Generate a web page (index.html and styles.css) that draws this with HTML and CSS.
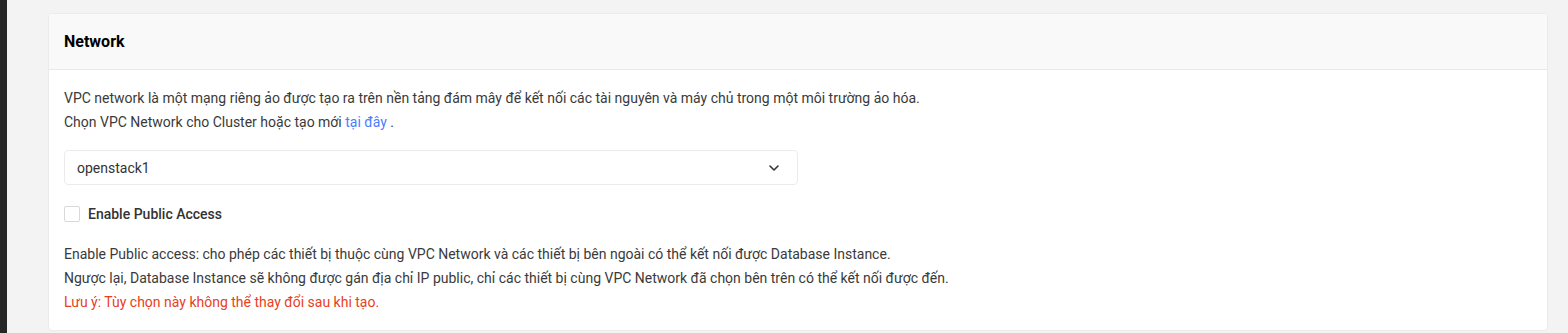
FILE: index.html
```html
<!DOCTYPE html>
<html lang="vi">
<head>
    <meta charset="UTF-8">
    <meta name="viewport" content="width=device-width, initial-scale=1.0">
    <title>Network</title>
    <link rel="stylesheet" href="styles.css">
</head>
<body>
    <div class="side-strip"></div>

    <div class="page">
        <!-- Network card -->
        <div class="card">
            <div class="card-header">
                <h2>Network</h2>
            </div>
            <div class="card-body">
                <p class="intro">
                    VPC network là một mạng riêng ảo được tạo ra trên nền tảng đám mây để kết nối các tài nguyên và máy chủ trong một môi trường ảo hóa.<br>
                    Chọn VPC Network cho Cluster hoặc tạo mới <a href="#" class="link">tại đây</a> .
                </p>

                <div class="select">
                    <span>openstack1</span>
                    <svg class="chevron" width="10" height="6" viewBox="0 0 10 6">
                        <path d="M1 1l4 4 4-4" fill="none" stroke="#333" stroke-width="1.6" stroke-linecap="round" stroke-linejoin="round"/>
                    </svg>
                </div>

                <label class="checkbox">
                    <span class="box"></span>
                    <span class="checkbox-label">Enable Public Access</span>
                </label>

                <p class="note">
                    Enable Public access: cho phép các thiết bị thuộc cùng VPC Network và các thiết bị bên ngoài có thể kết nối được Database Instance.<br>
                    Ngược lại, Database Instance sẽ không được gán địa chỉ IP public, chỉ các thiết bị cùng VPC Network đã chọn bên trên có thể kết nối được đến.<br>
                    <span class="warning">Lưu ý: Tùy chọn này không thể thay đổi sau khi tạo.</span>
                </p>
            </div>
        </div>
    </div>
</body>
</html>
```

FILE: styles.css
```css
body {
    font-family: Roboto, "Noto Sans", sans-serif;
    font-size: 14px;
    line-height: 24px;
    color: #3a3a3a;
    margin: 0;
    background-color: #f3f3f3;
    display: flex;
    height: 333px;
    overflow: hidden;
}

.side-strip {
    width: 7px;
    flex-shrink: 0;
    background-color: #262626;
}

.page {
    flex: 1;
    padding: 13px 20px 0 41px;
}

.card {
    background: #fff;
    border: 1px solid #ebebeb;
    border-radius: 4px;
    overflow: hidden;
}

.card-header {
    background-color: #f9f9f9;
    border-bottom: 1px solid #e8e8e8;
    height: 55px;
    display: flex;
    align-items: center;
    padding: 0 15px;
}

.card-header h2 {
    margin: 0;
    font-size: 16px;
    font-weight: 700;
    color: #000;
}

.card-body {
    padding: 16px 15px 16px 15px;
}

.intro {
    margin: 0 0 16px;
}

.link {
    color: #4a7dff;
    text-decoration: none;
}

.select {
    width: 734px;
    height: 35px;
    box-sizing: border-box;
    border: 1px solid #ebebeb;
    border-radius: 4px;
    display: flex;
    align-items: center;
    justify-content: space-between;
    padding: 0 18px 0 12px;
    color: #333;
}

.chevron {
    display: block;
}

.checkbox {
    display: flex;
    align-items: center;
    gap: 8px;
    margin-top: 17px;
}

.box {
    width: 14px;
    height: 14px;
    border: 1px solid #d9d9d9;
    border-radius: 2px;
    background: #fff;
}

.checkbox-label {
    font-weight: 500;
    color: #333;
}

.note {
    margin: 16px 0 0;
}

.warning {
    color: #e8401c;
}
```
